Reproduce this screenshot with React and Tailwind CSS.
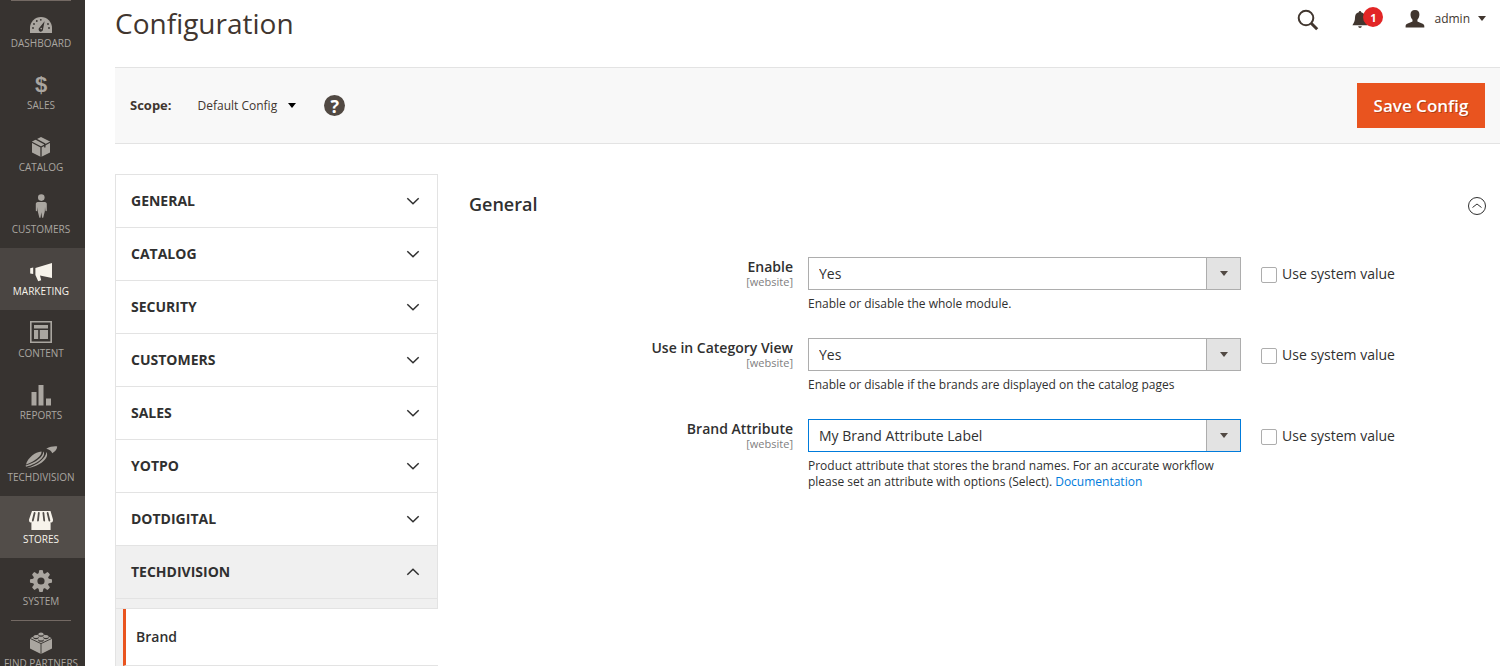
import React, { useState } from "react";

const menuItems = [
  { id: "dashboard", label: "Dashboard" },
  { id: "sales", label: "Sales" },
  { id: "catalog", label: "Catalog" },
  { id: "customers", label: "Customers" },
  { id: "marketing", label: "Marketing", state: "current" },
  { id: "content", label: "Content" },
  { id: "reports", label: "Reports" },
  { id: "techdivision", label: "Techdivision" },
  { id: "stores", label: "Stores", state: "active" },
  { id: "system", label: "System" },
  { id: "partners", label: "Find Partners" },
];

const configTabs = ["General", "Catalog", "Security", "Customers", "Sales", "Yotpo", "Dotdigital"];

const fields = [
  {
    id: "enable",
    label: "Enable",
    options: ["Yes", "No"],
    note: "Enable or disable the whole module.",
  },
  {
    id: "category-view",
    label: "Use in Category View",
    options: ["Yes", "No"],
    note: "Enable or disable if the brands are displayed on the catalog pages",
  },
  {
    id: "brand-attribute",
    label: "Brand Attribute",
    options: ["My Brand Attribute Label"],
    note: "Product attribute that stores the brand names. For an accurate workflow please set an attribute with options (Select).",
    link: "Documentation",
    highlighted: true,
  },
];

// "cut" is the colour of the gaps inside an icon, it has to equal the menu background
const menuIcons = {
  dashboard: (cut) => (
    <>
      <path d="M6 27v-5a11 11 0 0 1 22 0v5z" fill="currentColor" />
      <path d="M20.6 15.2l-1.6 8.2a2.2 2.2 0 1 1-3.4-1.8z" fill={cut} />
      <circle cx="17.2" cy="22.6" r="0.8" fill="currentColor" />
      <g fill={cut}>
        <circle cx="9" cy="22" r="0.9" />
        <circle cx="10" cy="18" r="0.9" />
        <circle cx="12.8" cy="15" r="0.9" />
        <circle cx="16.8" cy="13.8" r="0.9" />
        <circle cx="24" cy="18" r="0.9" />
        <circle cx="25" cy="22" r="0.9" />
      </g>
    </>
  ),
  catalog: (cut) => (
    <>
      <path d="M17 7l9 4.5v11L17 27l-9-4.5v-11z" fill="currentColor" />
      <g stroke={cut} fill="none">
        <path d="M7.5 12L17 17l9.500-5M17 17v10.500" strokeWidth="1.300" />
        <path d="M11.500 8.900l9.300 4.900v3.600" strokeWidth="1.400" />
      </g>
    </>
  ),
  customers: () => (
    <g fill="currentColor">
      <circle cx="17.3" cy="5.6" r="3.3" />
      <path d="M13.8 10h7c1.4 0 2 1 2 2v6.4c0 1-1.2 1-1.4.2L21 15l-.2 4.4-1.6 6.4h-1.1l-.8-5.6-.8 5.6h-1.1l-1.6-6.4-.2-4.4-.4 3.6c-.2.8-1.4.8-1.4-.2V12c0-1 .6-2 2-2z" />
    </g>
  ),
  marketing: () => (
    <g fill="currentColor">
      <path d="M28 9v15l-12-2.400 1.200 4.600-3 1-2.800-6.200V14z" />
      <path d="M6.200 14.300l3-.8v6.600l-3-.6z" />
    </g>
  ),
  content: () => (
    <g fill="currentColor">
      <path d="M6 5h22v22H6zM7.600 6.600v18.800h18.800V6.600z" fillRule="evenodd" />
      <path d="M10 9h14v3.400H10zM10 14h4.200v9H10zM15.800 14H24v9h-8.200z" />
    </g>
  ),
  reports: () => (
    <path d="M7.500 14h5v13.500h-5zM14.500 7h5v20.500h-5zM22 20.500h5v7h-5z" fill="currentColor" />
  ),
  techdivision: () => (
    <g fill="currentColor">
      <path d="M2 24.500C3.500 18 11 12 17.500 11.500c.8 3.600-6.500 10-15.500 13z" />
      <path d="M19.300 11.600c3.400 4-4.600 12.400-17.300 15.200l-.4-1.200C12 22.800 19.300 16.600 19.300 11.600z" />
      <path d="M22.300 8.700C26 6.600 30 6 33.200 6.400c-.2 3-1.800 4.900-5 6.800-.6-1.900-2.600-3.700-5.900-4.500z" />
      <path d="M22.200 12c4.200 5.200-6.200 14.800-19.200 16C13.500 25 22.500 17.800 22.200 12z" />
    </g>
  ),
  stores: (cut) => (
    <>
      <path
        d="M8 9h18.500l2.500 8.600c.2 2.800-1.400 3.200-2.400 2.600V28H7.400v-7.800c-1 .6-2.600.2-2.400-2.600z"
        fill="currentColor"
      />
      <g stroke={cut} strokeWidth="1.800" fill="none" strokeLinecap="round">
        <path d="M10.600 11l-1.800 7.500M14.800 11l-.8 7.500M19.400 11l.8 7.500M23.600 11l1.800 7.500" />
      </g>
    </>
  ),
  system: () => (
    <g fill="currentColor">
      <path
        d="M17 9a8 8 0 1 1 0 16 8 8 0 0 1 0-16zm0 4.400a3.600 3.600 0 1 0 0 7.200 3.600 3.600 0 0 0 0-7.200z"
        fillRule="evenodd"
      />
      {[0, 45, 90, 135, 180, 225, 270, 315].map((angle) => (
        <path key={angle} d="M14.400 10.600l.8-4.400q1.800-.6 3.600 0l.8 4.400z" transform={`rotate(${angle} 17 17)`} />
      ))}
    </g>
  ),
  partners: (cut) => (
    <>
      <path d="M6 12.200l11-5 11 5v10.200l-11 5.600-11-5.600z" fill="currentColor" />
      <path d="M6 12.400l11 5.200 11-5.200M17 17.600V28" stroke={cut} strokeWidth="0.900" fill="none" />
      {[[17, 8], [12, 10.4], [22, 10.4], [17, 13]].map(([x, y]) => (
        <g key={`${x}-${y}`}>
          <ellipse cx={x} cy={y + 1.2} rx="2.800" ry="1.600" fill={cut} />
          <ellipse cx={x} cy={y} rx="2.600" ry="1.500" fill="currentColor" />
        </g>
      ))}
    </>
  ),
};

function MenuIcon({ id, cut }) {
  if (id === "sales") {
    return (
      <span className="flex h-[30px] items-center pt-1 font-['Liberation_Sans',sans-serif] text-[22px] leading-none font-bold">
        $
      </span>
    );
  }
  return (
    <svg width="34" height="30" viewBox="0 0 34 30" aria-hidden="true">
      {menuIcons[id](cut)}
    </svg>
  );
}

function MenuItem({ item }) {
  const tone =
    item.state === "current"
      ? "bg-[#4a4542] text-[#f7f3eb]"
      : item.state === "active"
        ? "bg-[#524d49] text-[#f7f3eb]"
        : "text-[#aaa6a0]";
  const cut = item.state === "current" ? "#4a4542" : item.state === "active" ? "#524d49" : "#373330";

  return (
    <li>
      <a
        href={`#${item.id}`}
        className={`flex h-[62px] flex-col items-center pt-1.5 pr-[3px] text-[10px] leading-[14px] whitespace-nowrap uppercase ${tone}`}
      >
        <MenuIcon id={item.id} cut={cut} />
        {item.label}
      </a>
    </li>
  );
}

function Sidebar() {
  return (
    <nav className="w-[85px] shrink-0 bg-[#373330]">
      <ul className="relative">
        {menuItems.map((item) => (
          <MenuItem key={item.id} item={item} />
        ))}
        <li className="absolute top-0 left-[11px] h-px w-[60px] bg-[#736963]" />
        <li className="absolute top-[620px] left-[11px] h-px w-[60px] bg-[#736963]" />
      </ul>
    </nav>
  );
}

function Caret({ className }) {
  return (
    <svg width="8" height="5" viewBox="0 0 8 5" className={className} aria-hidden="true">
      <path d="M0 0h8L4 5z" fill="currentColor" />
    </svg>
  );
}

function Chevron({ up }) {
  return (
    <svg width="14" height="8" viewBox="0 0 14 8" fill="none" stroke="#303030" strokeWidth="1.500" aria-hidden="true">
      <path d={up ? "M1.300 6.800L7 1.300l5.700 5.500" : "M1.300 1.200L7 6.700l5.700-5.500"} />
    </svg>
  );
}

function Header() {
  return (
    <header className="flex h-[67px] items-start justify-between pr-[14px]">
      <h1 className="pt-[3px] text-[28px] leading-10 text-[#41362f]">Configuration</h1>
      <div className="flex h-10 items-center text-[#41362f]">
        <button type="button" aria-label="Search">
          <svg width="22" height="22" viewBox="0 0 22 22" fill="none" stroke="currentColor">
            <circle cx="9" cy="9" r="7.300" strokeWidth="2" />
            <path d="M14.200 14.200l6 6" strokeWidth="3" />
          </svg>
        </button>
        <button type="button" aria-label="Notifications" className="relative ml-[33px]">
          <svg width="16" height="18" viewBox="0 0 16 18" fill="currentColor">
            <path d="M8 0c.8 0 1.200.6 1.200 1.300 2.600.6 3.800 2.600 3.800 5.200 0 3.200.8 5 2.600 7.700H.4C2.200 11.500 3 9.700 3 6.500c0-2.600 1.200-4.600 3.800-5.200C6.800.6 7.200 0 8 0z" />
            <path d="M6.200 15.300h3.600c-.2 1.200-.9 1.700-1.800 1.700s-1.600-.5-1.800-1.700z" />
          </svg>
          <span className="absolute -top-1 left-[11px] flex size-5 items-center justify-center rounded-full bg-[#e22626] text-[11px] leading-none font-bold text-white">
            1
          </span>
        </button>
        <button type="button" className="ml-[37px] flex items-center pb-[3px] text-[12px] leading-5">
          <svg width="20" height="18" viewBox="0 0 20 18" fill="currentColor" aria-hidden="true">
            <path d="M10 0c3 0 4.600 1.900 4.400 4.800-.1 2.300-1 3.800-2 4.900v1.500c.4 1.300 6.600 1.600 6.900 4.600V17.500H.6v-1.700c.3-3 6.500-3.300 6.900-4.600V9.700c-1-1.100-1.900-2.600-2-4.900C5.400 1.900 7 0 10 0z" />
          </svg>
          <span className="ml-[9px]">admin</span>
          <Caret className="ml-2" />
        </button>
      </div>
    </header>
  );
}

function ScopeBar() {
  return (
    <div className="flex h-[77px] items-center border-y border-[#e3e3e3] bg-[#f8f8f8] px-[15px] text-[#41362f]">
      <span className="text-[13px] font-bold">Scope:</span>
      <button type="button" className="ml-[26px] flex items-center text-[12px]">
        Default Config
        <Caret className="ml-[11px] text-black" />
      </button>
      <a
        href="#help"
        aria-label="Help"
        className="ml-7 flex size-[21px] items-center justify-center rounded-full bg-[#514943] text-[18px] leading-none font-bold text-white"
      >
        ?
      </a>
      <button
        type="button"
        className="ml-auto h-[45px] min-w-32 bg-[#e9541f] px-4 text-[17px] font-semibold text-white text-shadow-[1px_1px_0_rgba(0,0,0,0.25)]"
      >
        Save Config
      </button>
    </div>
  );
}

function ConfigTab({ label, open }) {
  return (
    <button
      type="button"
      aria-expanded={Boolean(open)}
      className="flex h-[52px] w-full items-center justify-between pr-[17px] pl-[15px] font-bold uppercase"
    >
      <span className="pb-0.5">{label}</span>
      <Chevron up={open} />
    </button>
  );
}

function ConfigNav() {
  return (
    <nav className="w-[323px] shrink-0 text-[14px] text-[#303030]">
      <ul className="border-x border-t border-[#e3e3e3]">
        {configTabs.map((tab) => (
          <li key={tab} className="border-b border-[#e3e3e3]">
            <ConfigTab label={tab} />
          </li>
        ))}
        <li className="border-b border-[#e3e3e3] bg-[#f0f0f0]">
          <ConfigTab label="Techdivision" open />
          <div className="h-[10px] border-t border-[#e3e3e3]" />
        </li>
      </ul>
      <div className="border-l border-[#e3e3e3] bg-[#f0f0f0] pl-[7px]">
        <a
          href="#brand"
          className="flex h-[57px] items-center border-b border-l-3 border-b-[#e3e3e3] border-l-[#e9541f] bg-white pb-0.5 pl-[10px] font-semibold"
        >
          Brand
        </a>
      </div>
    </nav>
  );
}

function Field({ field }) {
  const [value, setValue] = useState(field.options[0]);
  const border = field.highlighted ? "border-[#007bdb]" : "border-[#adadad]";

  return (
    <div className="grid min-h-[81px] grid-cols-[324fr_433fr_229fr] gap-x-[15px]">
      <label htmlFor={field.id} className="text-right text-[14px] leading-5 font-semibold">
        {field.label}
        <span className="block text-[11px] leading-[9px] font-normal text-[#808080]">[website]</span>
      </label>
      <div>
        <div className="relative">
          <select
            id={field.id}
            value={value}
            onChange={(e) => setValue(e.target.value)}
            className={`block h-[33px] w-full appearance-none border bg-white pr-10 pl-[10px] text-[14px] outline-none ${border}`}
          >
            {field.options.map((option) => (
              <option key={option}>{option}</option>
            ))}
          </select>
          <span className="pointer-events-none absolute inset-y-px right-px flex w-[34px] items-center justify-center border-l border-[#adadad] bg-[#e3e3e3] text-[#514943]">
            <Caret />
          </span>
        </div>
        <p className="mt-1.5 text-[12px] leading-4">
          {field.note}
          {field.link && (
            <>
              {" "}
              <a href="#documentation" className="text-[#007bdb]">
                {field.link}
              </a>
            </>
          )}
        </p>
      </div>
      <label className="flex h-[33px] items-center pl-[5px] text-[14px]">
        <input
          type="checkbox"
          className="mt-[3px] mr-[5px] size-4 appearance-none rounded-[2px] border border-[#adadad] bg-white checked:bg-[#514943]"
        />
        Use system value
      </label>
    </div>
  );
}

export default function App() {
  return (
    <div className="flex h-screen overflow-hidden bg-white font-['Open_Sans',sans-serif] text-[#303030]">
      <Sidebar />
      <div className="min-w-0 flex-1 pr-[3px] pl-[30px]">
        <Header />
        <ScopeBar />
        <main className="flex gap-[31px] pt-[30px] pr-[15px]">
          <ConfigNav />
          <section className="min-w-0 flex-1">
            <div className="-mr-0.5 flex h-[83px] items-start justify-between pt-[18px]">
              <h2 className="text-[18px] leading-6 font-semibold">General</h2>
              <button type="button" aria-label="Collapse General" className="pt-1">
                <svg width="20" height="20" viewBox="0 0 20 20" fill="none" stroke="#303030">
                  <circle cx="10" cy="10" r="8.500" />
                  <path d="M5.500 11.500L10 8l4.500 3.500" />
                </svg>
              </button>
            </div>
            {fields.map((field) => (
              <Field key={field.id} field={field} />
            ))}
          </section>
        </main>
      </div>
    </div>
  );
}
